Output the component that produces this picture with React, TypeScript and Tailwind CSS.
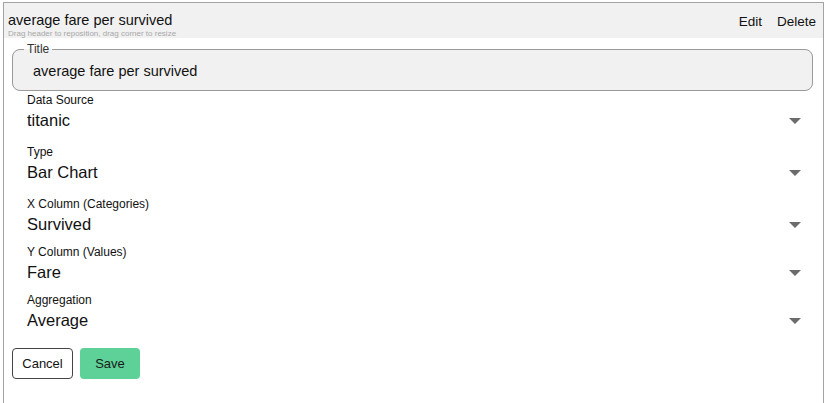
import React from "react";

const Arrow = () => (
  <svg width="12" height="6" viewBox="0 0 12 6" className="block">
    <path d="M0 0 L12 0 L6 6 Z" fill="#6b6b6b" />
  </svg>
);

const Field = ({ label, value, mb }: { label: string; value: string; mb: string }) => (
  <div className={`flex flex-col pl-[23px] pr-[22px] ${mb}`}>
    <div className="text-[12px] leading-[16px] text-[#111]">{label}</div>
    <div className="flex items-center justify-between h-[24px] mt-[1px]">
      <span className="text-[16.5px] leading-[20px] text-[#111] -translate-y-[1px]">{value}</span>
      <Arrow />
    </div>
  </div>
);

export default function App() {
  return (
    <div className="w-[827px] h-[403px] overflow-hidden bg-white" style={{ fontFamily: '"Liberation Sans", Arial, sans-serif' }}>
      <div className="ml-[3px] mt-[2px] w-[821px] h-[420px] border border-[#a3a3a3]">
        <div className="bg-[#f1f1f1] h-[35px] flex justify-between pl-[4px] pr-[7px]">
          <div className="flex flex-col">
            <div className="text-[14.5px] leading-[16px] mt-[9px] text-[#111]">average fare per survived</div>
            <div className="text-[8px] leading-[10px] text-[#a8a8a8] mt-[1px]">Drag header to reposition, drag corner to resize</div>
          </div>
          <div className="flex gap-[15px] text-[13.5px] leading-[16px] mt-[11px] text-[#111]">
            <span>Edit</span>
            <span>Delete</span>
          </div>
        </div>
        <div className="pt-[5px]">
          <fieldset className="mx-[8px] mr-[10px] h-[48px] rounded-[8px] border border-[#9a9a9a] bg-[#f1f1f1] px-[12px]">
            <legend className="text-[12px] leading-[12px] text-[#333] px-[3px] ml-[-1px]">Title</legend>
            <div className="text-[14.5px] leading-[16px] text-[#111] pl-[8px] mt-[8px]">average fare per survived</div>
          </fieldset>
          <div className="mt-[1px]">
            <Field label="Data Source" value="titanic" mb="mb-[11px]" />
            <Field label="Type" value="Bar Chart" mb="mb-[11px]" />
            <Field label="X Column (Categories)" value="Survived" mb="mb-[7px]" />
            <Field label="Y Column (Values)" value="Fare" mb="mb-[7px]" />
            <Field label="Aggregation" value="Average" mb="mb-[0px]" />
          </div>
          <div className="flex gap-[7px] pl-[8px] mt-[15px]">
            <button className="w-[61px] h-[31px] rounded-[4px] border border-[#444] bg-white text-[13px] text-[#111]">Cancel</button>
            <button className="w-[60px] h-[31px] rounded-[4px] bg-[#5dd197] text-[13px] text-[#1a1a1a]">Save</button>
          </div>
        </div>
      </div>
    </div>
  );
}
